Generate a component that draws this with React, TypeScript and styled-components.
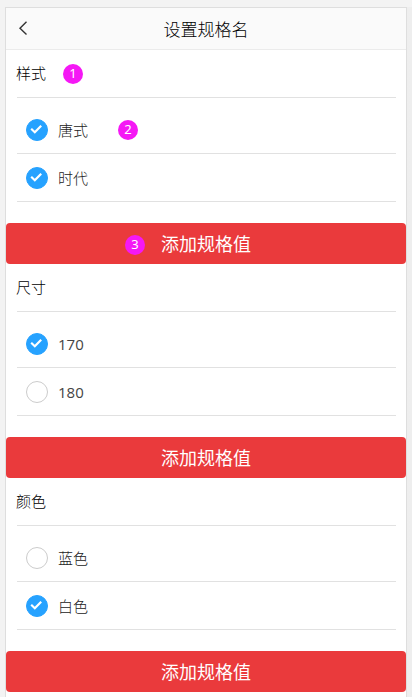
import React from "react";
import styled, { createGlobalStyle } from "styled-components";

const GlobalStyle = createGlobalStyle`
  * { box-sizing: border-box; }
  html, body { margin: 0; height: 100%; overflow: hidden; }
  body {
    background: linear-gradient(to right, #f3f3f3 0, #f3f3f3 50%, #eeeeee 100%);
    font-family: "Noto Sans", "Noto Sans CJK SC", sans-serif;
    font-weight: 400;
    color: #000;
  }
`;

const Page = styled.div`
  height: 697px;
  padding: 7px 5px 0;
  overflow: hidden;
  background: linear-gradient(to bottom, #f3f3f3 0, #f3f3f3 7px, transparent 7px);
`;

const Phone = styled.main`
  width: 402px;
  height: 700px;
  background: #fff;
  border: 1px solid #dedede;
`;

const Header = styled.header`
  display: grid;
  grid-template-columns: 36px 1fr 36px;
  align-items: center;
  height: 42px;
  background: #fafafa;
  border-bottom: 1px solid #ebebeb;
`;

const BackButton = styled.button`
  display: flex;
  justify-content: center;
  padding: 0 2px 1px 0;
  border: 0;
  background: none;
`;

const Title = styled.h1`
  margin: 3px 0 0;
  font-size: 17px;
  line-height: 24px;
  font-weight: 300;
  text-align: center;
`;

const Group = styled.section`
  display: flex;
  flex-direction: column;
`;

const GroupTitle = styled.h2`
  display: flex;
  align-items: center;
  gap: 17px;
  height: 48px;
  margin: 0 10px 0 11px;
  border-bottom: 1px solid #e1e1e1;
  font-size: 15px;
  font-weight: 300;
`;

const TitleText = styled.span`
  margin-left: -1px;
  padding-bottom: 2px;
  line-height: 22px;
`;

const Options = styled.ul`
  list-style: none;
  margin: 0 10px 21px 11px;
  padding: 8px 0 0;
`;

const Option = styled.li`
  display: flex;
  align-items: center;
  height: 48px;
  padding: 1px 0 0 9px;
  border-bottom: 1px solid #e1e1e1;
  font-size: 15px;
`;

const OptionLabel = styled.span<{ $numeric: boolean }>`
  line-height: 22px;
  font-family: "Open Sans", "Noto Sans CJK SC", sans-serif;
  font-weight: ${(p) => (p.$numeric ? 400 : 300)};
  color: ${(p) => (p.$numeric ? "#444" : "#222")};
`;

const Radio = styled.span<{ $on: boolean }>`
  display: flex;
  width: 22px;
  height: 22px;
  margin-right: 10px;
  border-radius: 50%;
  border: 1px solid ${(p) => (p.$on ? "#26a2ff" : "#ccc")};
  background: ${(p) => (p.$on ? "#26a2ff" : "#fff")};
`;

const Badge = styled.span<{ $gap?: number }>`
  display: flex;
  align-items: center;
  justify-content: center;
  width: 20px;
  height: 20px;
  margin-left: ${(p) => p.$gap ?? 0}px;
  padding-bottom: 1px;
  border-radius: 50%;
  background: #f518f5;
  color: #fff;
  font-size: 13px;
  line-height: 19px;
  font-weight: 400;
`;

const AddButton = styled.button`
  display: grid;
  grid-template-columns: 1fr auto 1fr;
  align-items: center;
  width: 400px;
  height: 41px;
  padding: 0;
  border: 0;
  border-radius: 4px;
  background: #ea3a3c;
  color: #fff;
  font-family: inherit;
  font-size: 18px;
  font-weight: 400;
`;

const BadgeSlot = styled.span`
  display: flex;
  justify-content: flex-end;
  padding: 3px 16px 0 0;
`;

const AddText = styled.span`
  grid-column: 2;
  line-height: 26px;
`;

type SpecValue = { label: string; on: boolean; badge?: string };
type Spec = { name: string; badge?: string; buttonBadge?: string; values: SpecValue[] };

const specs: Spec[] = [
  {
    name: "样式",
    badge: "1",
    buttonBadge: "3",
    values: [
      { label: "唐式", on: true, badge: "2" },
      { label: "时代", on: true },
    ],
  },
  { name: "尺寸", values: [{ label: "170", on: true }, { label: "180", on: false }] },
  { name: "颜色", values: [{ label: "蓝色", on: false }, { label: "白色", on: true }] },
];

export default function App() {
  return (
    <Page>
      <GlobalStyle />
      <Phone>
        <Header>
          <BackButton aria-label="返回">
            <svg width="10" height="16" viewBox="0 0 10 16" fill="none" stroke="#333" strokeWidth="1.4">
              <path d="M8.5 1.8 2 8.3l6.5 6.2" />
            </svg>
          </BackButton>
          <Title>设置规格名</Title>
        </Header>
        {specs.map((spec) => (
          <Group key={spec.name}>
            <GroupTitle>
              <TitleText>{spec.name}</TitleText>
              {spec.badge && <Badge>{spec.badge}</Badge>}
            </GroupTitle>
            <Options>
              {spec.values.map((v) => (
                <Option key={v.label}>
                  <Radio $on={v.on}>
                    {v.on && (
                      <svg width="20" height="20" viewBox="0 0 20 20" fill="none" stroke="#fff" strokeWidth="2.2">
                        <path d="M4.2 8.8 7.8 12.2 14.2 5.8" />
                      </svg>
                    )}
                  </Radio>
                  <OptionLabel $numeric={/^\d+$/.test(v.label)}>{v.label}</OptionLabel>
                  {v.badge && <Badge $gap={30}>{v.badge}</Badge>}
                </Option>
              ))}
            </Options>
            <AddButton>
              {spec.buttonBadge && (
                <BadgeSlot>
                  <Badge>{spec.buttonBadge}</Badge>
                </BadgeSlot>
              )}
              <AddText>添加规格值</AddText>
            </AddButton>
          </Group>
        ))}
      </Phone>
    </Page>
  );
}
